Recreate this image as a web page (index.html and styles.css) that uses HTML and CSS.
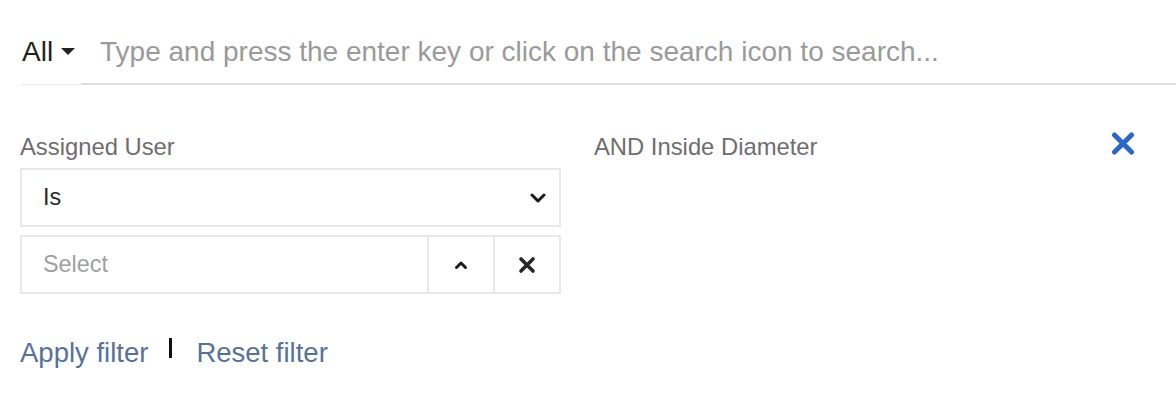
FILE: index.html
```html
<!DOCTYPE html>
<html lang="en">
<head>
<meta charset="utf-8">
<title>Filter</title>
<link rel="stylesheet" href="styles.css">
</head>
<body>
<div class="search">
  <div class="scope">
    <span class="scope-label">All</span>
    <span class="scope-caret"></span>
  </div>
  <div class="query">
    <span class="placeholder">Type and press the enter key or click on the search icon to search...</span>
  </div>
</div>

<div class="filters">
  <div class="filter-col">
    <div class="filter-label">Assigned User</div>
    <div class="box select-box">
      <span class="select-value">Is</span>
      <svg class="chev-down" width="16" height="10" viewBox="0 0 16 10"><polyline points="2,2 8,8 14,2" fill="none" stroke="#1a1a1a" stroke-width="3" stroke-linecap="round" stroke-linejoin="round"/></svg>
    </div>
    <div class="box combo-box">
      <span class="combo-input">Select</span>
      <span class="combo-btn">
        <svg width="14" height="10" viewBox="0 0 14 10"><polyline points="2.5,7.5 7,3 11.5,7.5" fill="none" stroke="#1a1a1a" stroke-width="3" stroke-linecap="round" stroke-linejoin="round"/></svg>
      </span>
      <span class="combo-btn">
        <svg width="18" height="18" viewBox="0 0 18 18"><path d="M3 3 L15 15 M15 3 L3 15" fill="none" stroke="#262626" stroke-width="3.6" stroke-linecap="round"/></svg>
      </span>
    </div>
  </div>
  <div class="filter-col">
    <div class="filter-head">
      <div class="filter-label">AND Inside Diameter</div>
      <svg class="remove" width="24" height="23" viewBox="0 0 24 23"><path d="M3.5 3 L20.5 20 M20.5 3 L3.5 20" fill="none" stroke="#2c66c6" stroke-width="5" stroke-linecap="round"/></svg>
    </div>
  </div>
</div>

<div class="actions">
  <a class="action-link">Apply filter</a>
  <span class="sep"></span>
  <a class="action-link">Reset filter</a>
</div>
</body>
</html>
```
FILE: styles.css
```css
html, body {
  margin: 0;
  padding: 0;
  background: #ffffff;
  font-family: "Liberation Sans", Arial, Helvetica, sans-serif;
}

.search {
  display: flex;
  margin: 24px 0 0 20px;
}

.scope {
  width: 61px;
  height: 61px;
  box-sizing: border-box;
  display: flex;
  align-items: center;
  padding: 0 0 4px 2px;
  border-bottom: 1px solid #ececec;
}

.scope-label {
  font-size: 28px;
  color: #222222;
}

.scope-caret {
  width: 0;
  height: 0;
  margin-left: 8px;
  margin-top: -2px;
  border-left: 7px solid transparent;
  border-right: 7px solid transparent;
  border-top: 7px solid #222222;
}

.query {
  flex: 1;
  height: 61px;
  box-sizing: border-box;
  display: flex;
  align-items: center;
  padding: 0 0 4px 19px;
  border-bottom: 2px solid #dedede;
}

.placeholder {
  font-size: 28px;
  color: #9a9a9a;
}

.filters {
  display: grid;
  grid-template-columns: 541px 541px;
  column-gap: 33px;
  margin: 49px 0 0 20px;
}

.filter-col {
  display: flex;
  flex-direction: column;
}

.filter-head {
  display: flex;
  justify-content: space-between;
  align-items: flex-start;
}

.filter-label {
  font-size: 23.8px;
  line-height: 26px;
  color: #6e6e6e;
  margin-bottom: 8px;
}

.remove {
  margin-top: -2px;
}

.box {
  height: 59px;
  box-sizing: border-box;
  border: 2px solid #e8e8e8;
  display: flex;
  align-items: center;
}

.select-box {
  justify-content: space-between;
  padding: 0 13px 0 21px;
}

.select-value {
  font-size: 23.4px;
  color: #2a2a2a;
}

.combo-box {
  margin-top: 8px;
}

.combo-input {
  flex: 1;
  padding-left: 21px;
  font-size: 23.4px;
  color: #a0a0a0;
  align-self: stretch;
  display: flex;
  align-items: center;
}

.combo-btn {
  width: 66px;
  align-self: stretch;
  box-sizing: border-box;
  border-left: 2px solid #e8e8e8;
  display: flex;
  align-items: center;
  justify-content: center;
}

.actions {
  display: flex;
  align-items: flex-start;
  margin: 43px 0 0 20px;
}

.action-link {
  font-size: 27.5px;
  line-height: 32px;
  color: #57729a;
  text-decoration: none;
}

.sep {
  width: 3px;
  height: 20px;
  background: #111111;
  margin: 1px 24px 0 21px;
}
```
